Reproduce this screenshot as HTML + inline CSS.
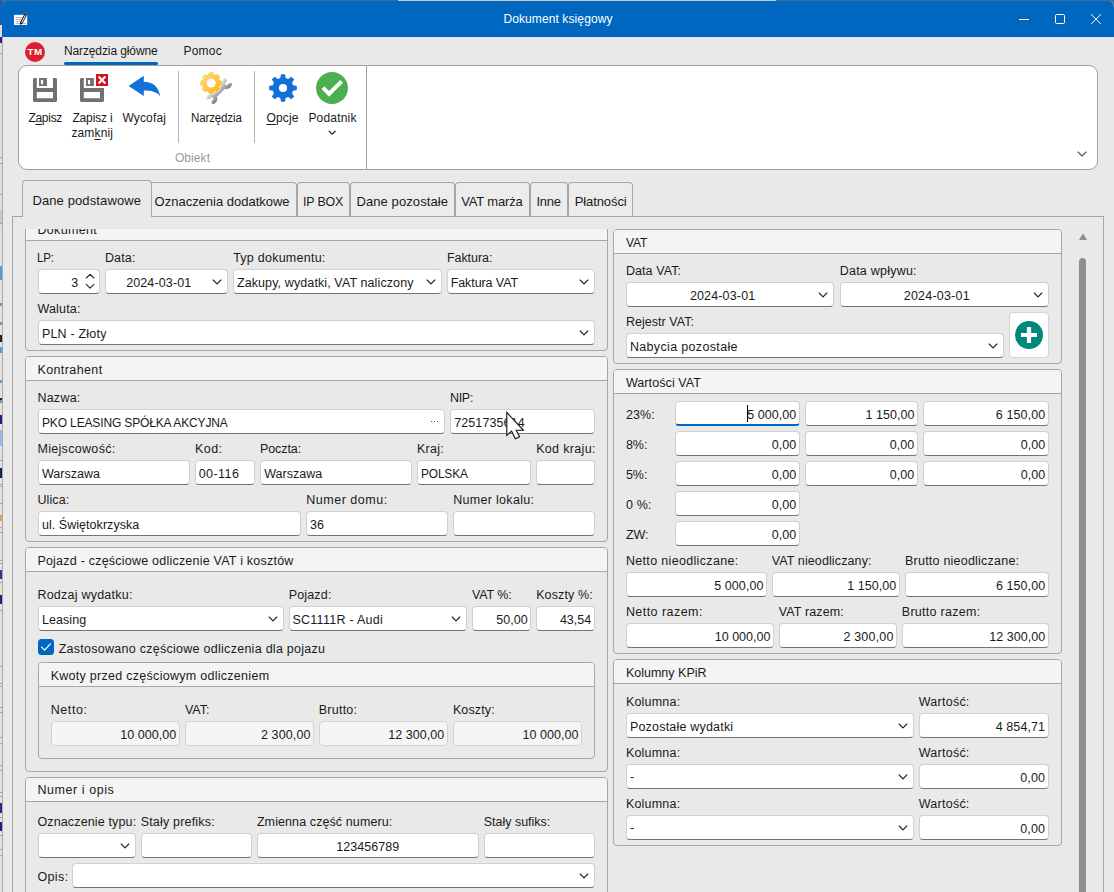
<!DOCTYPE html>
<html><head><meta charset="utf-8"><title>Dokument księgowy</title>
<style>
html,body{margin:0;padding:0;width:1114px;height:892px;overflow:hidden;background:#3d6c9e;}
#root{left:0;top:0;width:1114px;height:892px;overflow:hidden;background:#3d6c9e;font-family:'Liberation Sans', sans-serif;}
div,svg,span.t{position:absolute;}
span.t{white-space:pre;line-height:16px;font-family:'Liberation Sans', sans-serif;}
u{text-decoration:underline;text-underline-offset:1.5px;text-decoration-thickness:1px;}
</style></head><body><div id="root">
<div style="left:0px;top:0px;width:3px;height:892px;background:#dedede;"></div>
<div style="left:0px;top:0px;width:3px;height:25px;background:#0d63ba;"></div>
<div style="left:0px;top:25px;width:3px;height:12px;background:#dcdcdc;"></div>
<div style="left:0px;top:37px;width:2px;height:6px;background:#3a1a7a;"></div>
<div style="left:0px;top:234px;width:2px;height:386px;background:#e6e3da;"></div>
<div style="left:0px;top:620px;width:2px;height:272px;background:#e3e2de;"></div>
<div style="left:0px;top:53px;width:2px;height:1px;background:#a4a4a4;"></div>
<div style="left:0px;top:157px;width:2px;height:1px;background:#a4a4a4;"></div>
<div style="left:0px;top:163px;width:2px;height:1px;background:#a4a4a4;"></div>
<div style="left:0px;top:194px;width:2px;height:1px;background:#a4a4a4;"></div>
<div style="left:0px;top:223px;width:2px;height:1px;background:#a4a4a4;"></div>
<div style="left:0px;top:460px;width:2px;height:1px;background:#a4a4a4;"></div>
<div style="left:0px;top:484px;width:2px;height:1px;background:#a4a4a4;"></div>
<div style="left:0px;top:486px;width:2px;height:1px;background:#a4a4a4;"></div>
<div style="left:0px;top:503px;width:2px;height:1px;background:#a4a4a4;"></div>
<div style="left:0px;top:527px;width:2px;height:1px;background:#a4a4a4;"></div>
<div style="left:0px;top:532px;width:2px;height:1px;background:#a4a4a4;"></div>
<div style="left:0px;top:560px;width:2px;height:1px;background:#a4a4a4;"></div>
<div style="left:0px;top:563px;width:2px;height:1px;background:#a4a4a4;"></div>
<div style="left:0px;top:582px;width:2px;height:1px;background:#a4a4a4;"></div>
<div style="left:0px;top:610px;width:2px;height:1px;background:#a4a4a4;"></div>
<div style="left:0px;top:666px;width:2px;height:1px;background:#a4a4a4;"></div>
<div style="left:0px;top:683px;width:2px;height:1px;background:#a4a4a4;"></div>
<div style="left:0px;top:686px;width:2px;height:1px;background:#a4a4a4;"></div>
<div style="left:0px;top:707px;width:2px;height:1px;background:#a4a4a4;"></div>
<div style="left:0px;top:712px;width:2px;height:1px;background:#a4a4a4;"></div>
<div style="left:0px;top:737px;width:2px;height:1px;background:#a4a4a4;"></div>
<div style="left:0px;top:743px;width:2px;height:1px;background:#a4a4a4;"></div>
<div style="left:0px;top:765px;width:2px;height:1px;background:#a4a4a4;"></div>
<div style="left:0px;top:770px;width:2px;height:1px;background:#a4a4a4;"></div>
<div style="left:0px;top:792px;width:2px;height:1px;background:#a4a4a4;"></div>
<div style="left:0px;top:796px;width:2px;height:1px;background:#a4a4a4;"></div>
<div style="left:0px;top:817px;width:2px;height:1px;background:#a4a4a4;"></div>
<div style="left:0px;top:835px;width:2px;height:1px;background:#a4a4a4;"></div>
<div style="left:0px;top:849px;width:2px;height:1px;background:#a4a4a4;"></div>
<div style="left:0px;top:855px;width:2px;height:1px;background:#a4a4a4;"></div>
<div style="left:0px;top:210px;width:2px;height:13px;background:#c8c8c8;"></div>
<div style="left:0px;top:266px;width:2px;height:14px;background:#5b9bd5;"></div>
<div style="left:0px;top:303px;width:2px;height:3px;background:#5b9bd5;"></div>
<div style="left:0px;top:322px;width:2px;height:3px;background:#5b9bd5;"></div>
<div style="left:0px;top:335px;width:2px;height:7px;background:#222;"></div>
<div style="left:0px;top:347px;width:2px;height:6px;background:#5b9bd5;"></div>
<div style="left:0px;top:380px;width:2px;height:3px;background:#5b9bd5;"></div>
<div style="left:0px;top:398px;width:2px;height:2px;background:#1a1a6a;"></div>
<div style="left:0px;top:400px;width:2px;height:3px;background:#5b9bd5;"></div>
<div style="left:0px;top:415px;width:2px;height:9px;background:#2a1a7a;"></div>
<div style="left:0px;top:430px;width:2px;height:16px;background:#8fbce8;"></div>
<div style="left:0px;top:468px;width:2px;height:10px;background:#10254a;"></div>
<div style="left:0px;top:515px;width:2px;height:6px;background:#e0a050;"></div>
<div style="left:0px;top:570px;width:2px;height:9px;background:#4a2a8a;"></div>
<div style="left:0px;top:595px;width:2px;height:9px;background:#2a1a7a;"></div>
<div style="left:0px;top:803px;width:2px;height:10px;background:#2a2a8a;"></div>
<div style="left:0px;top:822px;width:2px;height:9px;background:#2a1a7a;"></div>
<div style="left:2px;top:0px;width:1112px;height:892px;background:#a9a9a9;border-top-left-radius:8px;border-top-right-radius:8px;"></div>
<div style="left:3px;top:0px;width:1111px;height:892px;background:#e9e9e9;border-top-left-radius:8px;border-top-right-radius:8px;"></div>
<div style="left:2px;top:0px;width:1112px;height:37px;background:#0067c0;border-top-left-radius:8px;border-top-right-radius:8px;"></div>
<div style="left:0px;top:0px;width:1114px;height:1px;background:#3d6c9e;"></div>
<div style="left:398px;top:0px;width:378px;height:1px;background:#c9c9c9;"></div>
<svg style="left:14px;top:13px" width="14" height="13" viewBox="0 0 14 13">
<rect x="0" y="1.8" width="13.2" height="10.2" fill="#ffffff"/>
<path d="M1.5 4.5H8.5 M1.5 6.5H7.5 M1.5 8.5H6.5 M1.5 10.5H12" stroke="#bdb8a0" stroke-width="1"/>
<path d="M10.5 0.8 L13 2 L8.5 10.6 L6.2 12 L6.1 9.4 Z" fill="#0a0a0a"/>
<path d="M10.95 2.0 L11.9 2.45 L8.1 9.7 L7.2 9.25 Z" fill="#cfe8ff"/>
<path d="M11.1 0 L13.3 1 L12.9 2.1 L10.6 1 Z" fill="#e0391c"/>
</svg>
<svg style="left:1010px;top:8px" width="100" height="24" viewBox="0 0 100 24">
<path d="M9 11.5H19" stroke="#fff" stroke-width="1"/>
<rect x="45.5" y="6.5" width="9" height="9" rx="1.2" fill="none" stroke="#fff" stroke-width="1"/>
<path d="M81 6.2 L91 16.2 M91 6.2 L81 16.2" stroke="#fff" stroke-width="1"/>
</svg>
<div style="left:24.5px;top:41.5px;width:20.6px;height:20.6px;background:#dc1f2e;border-radius:50%;"><div style="left:0;top:0.3px;width:20.6px;height:20.6px;text-align:center;font:bold 9.8px/20.6px 'Liberation Sans', sans-serif;color:#fff;letter-spacing:0.5px;text-indent:0.5px">TM</div></div>
<div style="left:64px;top:62px;width:94px;height:3px;background:#0067c0;border-radius:1.5px;"></div>
<div style="left:18px;top:65px;width:1080px;height:105px;box-sizing:border-box;background:#fff;border:1px solid #a0a0a0;border-radius:9px;"></div>
<div style="left:366px;top:66px;width:1px;height:103px;background:#a0a0a0;"></div>
<div style="left:178px;top:71px;width:1px;height:72px;background:#b5b5b5;"></div>
<div style="left:254px;top:71px;width:1px;height:72px;background:#b5b5b5;"></div>
<svg style="left:33px;top:78px" width="24" height="24" viewBox="0 0 24 24"><path fill="#717171" fill-rule="evenodd" d="M1.5 0H22.5A1.5 1.5 0 0 1 24 1.5V22.5A1.5 1.5 0 0 1 22.5 24H1.5A1.5 1.5 0 0 1 0 22.5V1.5A1.5 1.5 0 0 1 1.5 0Z M3.8 0V10.1H20V0Z M3.8 14H20V20.2H3.8Z"/><path fill="#717171" fill-rule="evenodd" d="M6 0H13.9V7.9H6Z M7.9 2H10.1V6.3H7.9Z"/></svg>
<svg style="left:80px;top:78px" width="24" height="24" viewBox="0 0 24 24"><path fill="#717171" fill-rule="evenodd" d="M1.5 0H3.8V10.1H24V22.5A1.5 1.5 0 0 1 22.5 24H1.5A1.5 1.5 0 0 1 0 22.5V1.5A1.5 1.5 0 0 1 1.5 0Z M3.8 14H20V20.2H3.8Z"/><path fill="#717171" fill-rule="evenodd" d="M6 0H13.9V7.9H6Z M7.9 2H10.1V6.3H7.9Z"/></svg>
<svg style="left:96px;top:74px" width="12" height="12" viewBox="0 0 12 12"><rect width="12" height="12" fill="#d0121c"/><path d="M2.6 2.6L9.4 9.4M9.4 2.6L2.6 9.4" stroke="#fff" stroke-width="2.1"/></svg>
<svg style="left:128px;top:75px" width="33" height="22" viewBox="128 75 33 22"><path fill="#1271d6" d="M128.6 86 L143.8 75.8 L143.8 81.8 C152.5 81.9 158.6 86.5 160.1 96.2 C156.3 91.8 151.5 90.6 143.8 90.6 L143.8 95.9 Z"/></svg>
<svg style="left:196px;top:68px" width="40" height="38" viewBox="196 68 40 38">
<defs><linearGradient id="gy" gradientUnits="userSpaceOnUse" x1="202" y1="73" x2="220" y2="93"><stop offset="0" stop-color="#fddc7a"/><stop offset="1" stop-color="#fbb61a"/></linearGradient>
<linearGradient id="gw" gradientUnits="userSpaceOnUse" x1="0" y1="-5" x2="0" y2="5"><stop offset="0" stop-color="#d9dbde"/><stop offset="1" stop-color="#7f8288"/></linearGradient></defs>
<g transform="translate(219.25 91.3) rotate(-46)">
<rect x="-8.5" y="-2.2" width="17" height="4.4" fill="url(#gw)"/>
<path d="M 13.2 2.34 A 3.5 3.5 0 1 1 13.2 -2.34" fill="none" stroke="url(#gw)" stroke-width="3.9"/>
<path d="M -13.2 -2.34 A 3.5 3.5 0 1 1 -13.2 2.34" fill="none" stroke="url(#gw)" stroke-width="3.9"/>
</g>
<path d="M208.30 75.29L209.60 72.91L212.60 72.91L213.90 75.29A8.30 8.30 0 0 1 214.65 75.60L217.24 74.83L219.37 76.96L218.60 79.55A8.30 8.30 0 0 1 218.91 80.30L221.29 81.60L221.29 84.60L218.91 85.90A8.30 8.30 0 0 1 218.60 86.65L219.37 89.24L217.24 91.37L214.65 90.60A8.30 8.30 0 0 1 213.90 90.91L212.60 93.29L209.60 93.29L208.30 90.91A8.30 8.30 0 0 1 207.55 90.60L204.96 91.37L202.83 89.24L203.60 86.65A8.30 8.30 0 0 1 203.29 85.90L200.91 84.60L200.91 81.60L203.29 80.30A8.30 8.30 0 0 1 203.60 79.55L202.83 76.96L204.96 74.83L207.55 75.60A8.30 8.30 0 0 1 208.30 75.29ZM216.00 83.10A4.9 4.9 0 1 0 206.20 83.10A4.9 4.9 0 1 0 216.00 83.10Z" fill="#fff" stroke="#fff" stroke-width="2.4" stroke-linejoin="round" opacity="0.85"/>
<path d="M208.30 75.29L209.60 72.91L212.60 72.91L213.90 75.29A8.30 8.30 0 0 1 214.65 75.60L217.24 74.83L219.37 76.96L218.60 79.55A8.30 8.30 0 0 1 218.91 80.30L221.29 81.60L221.29 84.60L218.91 85.90A8.30 8.30 0 0 1 218.60 86.65L219.37 89.24L217.24 91.37L214.65 90.60A8.30 8.30 0 0 1 213.90 90.91L212.60 93.29L209.60 93.29L208.30 90.91A8.30 8.30 0 0 1 207.55 90.60L204.96 91.37L202.83 89.24L203.60 86.65A8.30 8.30 0 0 1 203.29 85.90L200.91 84.60L200.91 81.60L203.29 80.30A8.30 8.30 0 0 1 203.60 79.55L202.83 76.96L204.96 74.83L207.55 75.60A8.30 8.30 0 0 1 208.30 75.29ZM216.00 83.10A4.9 4.9 0 1 0 206.20 83.10A4.9 4.9 0 1 0 216.00 83.10Z" fill="url(#gy)" fill-rule="evenodd" stroke="url(#gy)" stroke-width="1.3" stroke-linejoin="round"/>
<circle cx="211.1" cy="83.1" r="4.4" fill="#fff"/>
</svg>
<svg style="left:268px;top:73px" width="30" height="30" viewBox="268 73 30 30"><path d="M280.30 77.96L281.05 74.14L284.95 74.14L285.70 77.96A10.40 10.40 0 0 1 288.19 78.99L291.42 76.82L294.18 79.58L292.01 82.81A10.40 10.40 0 0 1 293.04 85.30L296.86 86.05L296.86 89.95L293.04 90.70A10.40 10.40 0 0 1 292.01 93.19L294.18 96.42L291.42 99.18L288.19 97.01A10.40 10.40 0 0 1 285.70 98.04L284.95 101.86L281.05 101.86L280.30 98.04A10.40 10.40 0 0 1 277.81 97.01L274.58 99.18L271.82 96.42L273.99 93.19A10.40 10.40 0 0 1 272.96 90.70L269.14 89.95L269.14 86.05L272.96 85.30A10.40 10.40 0 0 1 273.99 82.81L271.82 79.58L274.58 76.82L277.81 78.99A10.40 10.40 0 0 1 280.30 77.96ZM287.10 88.00A4.1 4.1 0 1 0 278.90 88.00A4.1 4.1 0 1 0 287.10 88.00Z" fill="#1271d6" fill-rule="evenodd"/></svg>
<svg style="left:316px;top:72px" width="32" height="32" viewBox="316 72 32 32"><circle cx="332" cy="88" r="15.95" fill="#4caf50"/><path d="M321.6 89 L324.3 86.2 L329 91 L340.2 80 L343 82.8 L329 96.8 Z" fill="#fff"/></svg>
<svg style="left:328px;top:130px" width="9" height="6" viewBox="0 0 9 6"><path d="M1.2 1.3 L4.2 4.1 L7.2 1.3" fill="none" stroke="#222" stroke-width="1.25" stroke-linecap="round" stroke-linejoin="round"/></svg>
<svg style="left:1077px;top:151px" width="10" height="7" viewBox="0 0 10 7"><path d="M1 1 L5 5 L9 1" fill="none" stroke="#555" stroke-width="1.1" stroke-linecap="round" stroke-linejoin="round"/></svg>
<div style="left:12px;top:216px;width:1092px;height:700px;box-sizing:border-box;border:1px solid #a6a6a6;background:#e9e9e9;"></div>
<div style="left:147px;top:182px;width:150px;height:34px;box-sizing:border-box;background:#ececec;border:1px solid #a6a6a6;border-bottom:none;border-radius:4px 4px 0 0;"></div>
<div style="left:297px;top:182px;width:53px;height:34px;box-sizing:border-box;background:#ececec;border:1px solid #a6a6a6;border-bottom:none;border-radius:4px 4px 0 0;"></div>
<div style="left:350px;top:182px;width:105px;height:34px;box-sizing:border-box;background:#ececec;border:1px solid #a6a6a6;border-bottom:none;border-radius:4px 4px 0 0;"></div>
<div style="left:455px;top:182px;width:75px;height:34px;box-sizing:border-box;background:#ececec;border:1px solid #a6a6a6;border-bottom:none;border-radius:4px 4px 0 0;"></div>
<div style="left:530px;top:182px;width:38px;height:34px;box-sizing:border-box;background:#ececec;border:1px solid #a6a6a6;border-bottom:none;border-radius:4px 4px 0 0;"></div>
<div style="left:568px;top:182px;width:65px;height:34px;box-sizing:border-box;background:#ececec;border:1px solid #a6a6a6;border-bottom:none;border-radius:4px 4px 0 0;"></div>
<div style="left:22px;top:180px;width:130px;height:37px;box-sizing:border-box;background:#e9e9e9;border:1px solid #a6a6a6;border-bottom:none;border-radius:4px 4px 0 0;"></div>
<div style="left:0;top:229px;width:612px;height:663px;overflow:hidden"><div style="left:0;top:-229px;width:612px;height:892px">
<div style="left:25px;top:216px;width:583px;height:135px;box-sizing:border-box;background:#e9e9e9;border:1px solid #a6a6a6;border-radius:4px;overflow:hidden;"><div style="left:0;top:0;width:581px;height:23px;background:#f4f4f4;border-bottom:1px solid #a6a6a6"></div></div>
<span class="t" style="left:37.40px;top:222px;font-size:12.5px;color:#1a1a1a;letter-spacing:0.339px;">Dokument</span>
</div></div>
<div style="left:38px;top:269px;width:62px;height:25px;box-sizing:border-box;background:#fff;border:1px solid #d0d0d0;border-bottom:1px solid #757575;border-radius:4px;"></div>
<svg style="left:85px;top:273px" width="11" height="17" viewBox="0 0 11 17"><path d="M1.3 5.0 L5.1 1.3 L8.9 5.0 M1.3 11.4 L5.1 15.1 L8.9 11.4" fill="none" stroke="#222" stroke-width="1.1" stroke-linecap="round" stroke-linejoin="round"/></svg>
<div style="left:105px;top:269px;width:123px;height:25px;box-sizing:border-box;background:#fff;border:1px solid #d0d0d0;border-bottom:1px solid #757575;border-radius:4px;"><svg width="10" height="6" viewBox="0 0 10 6" style="position:absolute;right:5px;top:9px"><path d="M1.2 1 L5 4.8 L8.8 1" fill="none" stroke="#222" stroke-width="1.15" stroke-linecap="round" stroke-linejoin="round"/></svg></div>
<div style="left:233px;top:269px;width:209px;height:25px;box-sizing:border-box;background:#fff;border:1px solid #d0d0d0;border-bottom:1px solid #757575;border-radius:4px;"><svg width="10" height="6" viewBox="0 0 10 6" style="position:absolute;right:5px;top:9px"><path d="M1.2 1 L5 4.8 L8.8 1" fill="none" stroke="#222" stroke-width="1.15" stroke-linecap="round" stroke-linejoin="round"/></svg></div>
<div style="left:447px;top:269px;width:148px;height:25px;box-sizing:border-box;background:#fff;border:1px solid #d0d0d0;border-bottom:1px solid #757575;border-radius:4px;"><svg width="10" height="6" viewBox="0 0 10 6" style="position:absolute;right:5px;top:9px"><path d="M1.2 1 L5 4.8 L8.8 1" fill="none" stroke="#222" stroke-width="1.15" stroke-linecap="round" stroke-linejoin="round"/></svg></div>
<div style="left:38px;top:320px;width:557px;height:25px;box-sizing:border-box;background:#fff;border:1px solid #d0d0d0;border-bottom:1px solid #757575;border-radius:4px;"><svg width="10" height="6" viewBox="0 0 10 6" style="position:absolute;right:5px;top:9px"><path d="M1.2 1 L5 4.8 L8.8 1" fill="none" stroke="#222" stroke-width="1.15" stroke-linecap="round" stroke-linejoin="round"/></svg></div>
<div style="left:25px;top:356px;width:583px;height:186px;box-sizing:border-box;background:#e9e9e9;border:1px solid #a6a6a6;border-radius:4px;overflow:hidden;"><div style="left:0;top:0;width:581px;height:23px;background:#f4f4f4;border-bottom:1px solid #a6a6a6"></div></div>
<div style="left:38px;top:409px;width:407px;height:25px;box-sizing:border-box;background:#fff;border:1px solid #d0d0d0;border-bottom:1px solid #757575;border-radius:4px;"></div>
<div style="left:431px;top:421px;width:8px;height:2px;"><div style="left:0;top:0;width:1.3px;height:1.3px;background:#555"></div><div style="left:3px;top:0;width:1.3px;height:1.3px;background:#555"></div><div style="left:6px;top:0;width:1.3px;height:1.3px;background:#555"></div></div>
<div style="left:450px;top:409px;width:145px;height:25px;box-sizing:border-box;background:#fff;border:1px solid #d0d0d0;border-bottom:1px solid #757575;border-radius:4px;"></div>
<div style="left:38px;top:460px;width:152px;height:25px;box-sizing:border-box;background:#fff;border:1px solid #d0d0d0;border-bottom:1px solid #757575;border-radius:4px;"></div>
<div style="left:195px;top:460px;width:60px;height:25px;box-sizing:border-box;background:#fff;border:1px solid #d0d0d0;border-bottom:1px solid #757575;border-radius:4px;"></div>
<div style="left:260px;top:460px;width:152px;height:25px;box-sizing:border-box;background:#fff;border:1px solid #d0d0d0;border-bottom:1px solid #757575;border-radius:4px;"></div>
<div style="left:417px;top:460px;width:114px;height:25px;box-sizing:border-box;background:#fff;border:1px solid #d0d0d0;border-bottom:1px solid #757575;border-radius:4px;"></div>
<div style="left:536px;top:460px;width:59px;height:25px;box-sizing:border-box;background:#fff;border:1px solid #d0d0d0;border-bottom:1px solid #757575;border-radius:4px;"></div>
<div style="left:38px;top:511px;width:263px;height:25px;box-sizing:border-box;background:#fff;border:1px solid #d0d0d0;border-bottom:1px solid #757575;border-radius:4px;"></div>
<div style="left:306px;top:511px;width:142px;height:25px;box-sizing:border-box;background:#fff;border:1px solid #d0d0d0;border-bottom:1px solid #757575;border-radius:4px;"></div>
<div style="left:453px;top:511px;width:142px;height:25px;box-sizing:border-box;background:#fff;border:1px solid #d0d0d0;border-bottom:1px solid #757575;border-radius:4px;"></div>
<div style="left:25px;top:547px;width:583px;height:225px;box-sizing:border-box;background:#e9e9e9;border:1px solid #a6a6a6;border-radius:4px;overflow:hidden;"><div style="left:0;top:0;width:581px;height:23px;background:#f4f4f4;border-bottom:1px solid #a6a6a6"></div></div>
<div style="left:38px;top:606px;width:246px;height:25px;box-sizing:border-box;background:#fff;border:1px solid #d0d0d0;border-bottom:1px solid #757575;border-radius:4px;"><svg width="10" height="6" viewBox="0 0 10 6" style="position:absolute;right:5px;top:9px"><path d="M1.2 1 L5 4.8 L8.8 1" fill="none" stroke="#222" stroke-width="1.15" stroke-linecap="round" stroke-linejoin="round"/></svg></div>
<div style="left:289px;top:606px;width:178px;height:25px;box-sizing:border-box;background:#fff;border:1px solid #d0d0d0;border-bottom:1px solid #757575;border-radius:4px;"><svg width="10" height="6" viewBox="0 0 10 6" style="position:absolute;right:5px;top:9px"><path d="M1.2 1 L5 4.8 L8.8 1" fill="none" stroke="#222" stroke-width="1.15" stroke-linecap="round" stroke-linejoin="round"/></svg></div>
<div style="left:472px;top:606px;width:59px;height:25px;box-sizing:border-box;background:#fff;border:1px solid #d0d0d0;border-bottom:1px solid #757575;border-radius:4px;"></div>
<div style="left:536px;top:606px;width:59px;height:25px;box-sizing:border-box;background:#fff;border:1px solid #d0d0d0;border-bottom:1px solid #757575;border-radius:4px;"></div>
<div style="left:38px;top:639px;width:16px;height:16px;background:#0067c0;border-radius:3.5px;"><svg style="left:0;top:0" width="16" height="16" viewBox="0 0 16 16"><path d="M3.6 8.2 L6.6 11.2 L12.4 4.8" fill="none" stroke="#fff" stroke-width="1.2" stroke-linecap="round" stroke-linejoin="round"/></svg></div>
<div style="left:38px;top:662px;width:557px;height:97px;box-sizing:border-box;background:#e9e9e9;border:1px solid #a6a6a6;border-radius:4px;overflow:hidden;"><div style="left:0;top:0;width:555px;height:23px;background:#f4f4f4;border-bottom:1px solid #a6a6a6"></div></div>
<div style="left:51px;top:721px;width:129px;height:25px;box-sizing:border-box;background:#f5f5f5;border:1px solid #d2d2d2;border-radius:4px;"></div>
<div style="left:185px;top:721px;width:129px;height:25px;box-sizing:border-box;background:#f5f5f5;border:1px solid #d2d2d2;border-radius:4px;"></div>
<div style="left:319px;top:721px;width:129px;height:25px;box-sizing:border-box;background:#f5f5f5;border:1px solid #d2d2d2;border-radius:4px;"></div>
<div style="left:453px;top:721px;width:129px;height:25px;box-sizing:border-box;background:#f5f5f5;border:1px solid #d2d2d2;border-radius:4px;"></div>
<div style="left:25px;top:777px;width:583px;height:124px;box-sizing:border-box;background:#e9e9e9;border:1px solid #a6a6a6;border-radius:4px;overflow:hidden;"><div style="left:0;top:0;width:581px;height:23px;background:#f4f4f4;border-bottom:1px solid #a6a6a6"></div></div>
<div style="left:38px;top:833px;width:98px;height:25px;box-sizing:border-box;background:#fff;border:1px solid #d0d0d0;border-bottom:1px solid #757575;border-radius:4px;"><svg width="10" height="6" viewBox="0 0 10 6" style="position:absolute;right:5px;top:9px"><path d="M1.2 1 L5 4.8 L8.8 1" fill="none" stroke="#222" stroke-width="1.15" stroke-linecap="round" stroke-linejoin="round"/></svg></div>
<div style="left:141px;top:833px;width:111px;height:25px;box-sizing:border-box;background:#fff;border:1px solid #d0d0d0;border-bottom:1px solid #757575;border-radius:4px;"></div>
<div style="left:257px;top:833px;width:222px;height:25px;box-sizing:border-box;background:#fff;border:1px solid #d0d0d0;border-bottom:1px solid #757575;border-radius:4px;"></div>
<div style="left:484px;top:833px;width:111px;height:25px;box-sizing:border-box;background:#fff;border:1px solid #d0d0d0;border-bottom:1px solid #757575;border-radius:4px;"></div>
<div style="left:72px;top:863px;width:523px;height:25px;box-sizing:border-box;background:#fff;border:1px solid #d0d0d0;border-bottom:1px solid #757575;border-radius:4px;"><svg width="10" height="6" viewBox="0 0 10 6" style="position:absolute;right:5px;top:9px"><path d="M1.2 1 L5 4.8 L8.8 1" fill="none" stroke="#222" stroke-width="1.15" stroke-linecap="round" stroke-linejoin="round"/></svg></div>
<div style="left:613px;top:229px;width:449px;height:135px;box-sizing:border-box;background:#e9e9e9;border:1px solid #a6a6a6;border-radius:4px;overflow:hidden;"><div style="left:0;top:0;width:447px;height:23px;background:#f4f4f4;border-bottom:1px solid #a6a6a6"></div></div>
<div style="left:626px;top:282px;width:208px;height:25px;box-sizing:border-box;background:#fff;border:1px solid #d0d0d0;border-bottom:1px solid #757575;border-radius:4px;"><svg width="10" height="6" viewBox="0 0 10 6" style="position:absolute;right:5px;top:9px"><path d="M1.2 1 L5 4.8 L8.8 1" fill="none" stroke="#222" stroke-width="1.15" stroke-linecap="round" stroke-linejoin="round"/></svg></div>
<div style="left:840px;top:282px;width:209px;height:25px;box-sizing:border-box;background:#fff;border:1px solid #d0d0d0;border-bottom:1px solid #757575;border-radius:4px;"><svg width="10" height="6" viewBox="0 0 10 6" style="position:absolute;right:5px;top:9px"><path d="M1.2 1 L5 4.8 L8.8 1" fill="none" stroke="#222" stroke-width="1.15" stroke-linecap="round" stroke-linejoin="round"/></svg></div>
<div style="left:626px;top:333px;width:378px;height:25px;box-sizing:border-box;background:#fff;border:1px solid #d0d0d0;border-bottom:1px solid #757575;border-radius:4px;"><svg width="10" height="6" viewBox="0 0 10 6" style="position:absolute;right:5px;top:9px"><path d="M1.2 1 L5 4.8 L8.8 1" fill="none" stroke="#222" stroke-width="1.15" stroke-linecap="round" stroke-linejoin="round"/></svg></div>
<div style="left:1009px;top:312px;width:40px;height:46px;box-sizing:border-box;background:#ffffff;border:1px solid #d4d4d4;border-radius:4px;"></div>
<svg style="left:1015px;top:321px" width="28" height="28" viewBox="0 0 28 28"><circle cx="14" cy="14" r="14" fill="#00897b"/><path d="M14 6V22M6 14H22" stroke="#fff" stroke-width="4.2"/></svg>
<div style="left:613px;top:369px;width:449px;height:285px;box-sizing:border-box;background:#e9e9e9;border:1px solid #a6a6a6;border-radius:4px;overflow:hidden;"><div style="left:0;top:0;width:447px;height:23px;background:#f4f4f4;border-bottom:1px solid #a6a6a6"></div></div>
<div style="left:675px;top:401px;width:125px;height:25px;box-sizing:border-box;background:#fff;border:1px solid #d0d0d0;border-bottom:2px solid #0067c0;border-radius:4px;"></div>
<div style="left:805px;top:401px;width:113px;height:25px;box-sizing:border-box;background:#fff;border:1px solid #d0d0d0;border-bottom:1px solid #757575;border-radius:4px;"></div>
<div style="left:923px;top:401px;width:126px;height:25px;box-sizing:border-box;background:#fff;border:1px solid #d0d0d0;border-bottom:1px solid #757575;border-radius:4px;"></div>
<div style="left:675px;top:431px;width:125px;height:25px;box-sizing:border-box;background:#fff;border:1px solid #d0d0d0;border-bottom:1px solid #757575;border-radius:4px;"></div>
<div style="left:805px;top:431px;width:113px;height:25px;box-sizing:border-box;background:#fff;border:1px solid #d0d0d0;border-bottom:1px solid #757575;border-radius:4px;"></div>
<div style="left:923px;top:431px;width:126px;height:25px;box-sizing:border-box;background:#fff;border:1px solid #d0d0d0;border-bottom:1px solid #757575;border-radius:4px;"></div>
<div style="left:675px;top:461px;width:125px;height:25px;box-sizing:border-box;background:#fff;border:1px solid #d0d0d0;border-bottom:1px solid #757575;border-radius:4px;"></div>
<div style="left:805px;top:461px;width:113px;height:25px;box-sizing:border-box;background:#fff;border:1px solid #d0d0d0;border-bottom:1px solid #757575;border-radius:4px;"></div>
<div style="left:923px;top:461px;width:126px;height:25px;box-sizing:border-box;background:#fff;border:1px solid #d0d0d0;border-bottom:1px solid #757575;border-radius:4px;"></div>
<div style="left:675px;top:491px;width:125px;height:25px;box-sizing:border-box;background:#fff;border:1px solid #d0d0d0;border-bottom:1px solid #757575;border-radius:4px;"></div>
<div style="left:675px;top:521px;width:125px;height:25px;box-sizing:border-box;background:#fff;border:1px solid #d0d0d0;border-bottom:1px solid #757575;border-radius:4px;"></div>
<div style="left:747px;top:405px;width:1px;height:17px;background:#000;"></div>
<div style="left:626px;top:572px;width:141px;height:25px;box-sizing:border-box;background:#fff;border:1px solid #d0d0d0;border-bottom:1px solid #757575;border-radius:4px;"></div>
<div style="left:772px;top:572px;width:128px;height:25px;box-sizing:border-box;background:#fff;border:1px solid #d0d0d0;border-bottom:1px solid #757575;border-radius:4px;"></div>
<div style="left:905px;top:572px;width:144px;height:25px;box-sizing:border-box;background:#fff;border:1px solid #d0d0d0;border-bottom:1px solid #757575;border-radius:4px;"></div>
<div style="left:626px;top:623px;width:148px;height:25px;box-sizing:border-box;background:#fff;border:1px solid #d0d0d0;border-bottom:1px solid #757575;border-radius:4px;"></div>
<div style="left:779px;top:623px;width:118px;height:25px;box-sizing:border-box;background:#fff;border:1px solid #d0d0d0;border-bottom:1px solid #757575;border-radius:4px;"></div>
<div style="left:902px;top:623px;width:147px;height:25px;box-sizing:border-box;background:#fff;border:1px solid #d0d0d0;border-bottom:1px solid #757575;border-radius:4px;"></div>
<div style="left:613px;top:659px;width:449px;height:187px;box-sizing:border-box;background:#e9e9e9;border:1px solid #a6a6a6;border-radius:4px;overflow:hidden;"><div style="left:0;top:0;width:447px;height:23px;background:#f4f4f4;border-bottom:1px solid #a6a6a6"></div></div>
<div style="left:626px;top:713px;width:288px;height:25px;box-sizing:border-box;background:#fff;border:1px solid #d0d0d0;border-bottom:1px solid #757575;border-radius:4px;"><svg width="10" height="6" viewBox="0 0 10 6" style="position:absolute;right:5px;top:9px"><path d="M1.2 1 L5 4.8 L8.8 1" fill="none" stroke="#222" stroke-width="1.15" stroke-linecap="round" stroke-linejoin="round"/></svg></div>
<div style="left:919px;top:713px;width:130px;height:25px;box-sizing:border-box;background:#fff;border:1px solid #d0d0d0;border-bottom:1px solid #757575;border-radius:4px;"></div>
<div style="left:626px;top:764px;width:288px;height:25px;box-sizing:border-box;background:#fff;border:1px solid #d0d0d0;border-bottom:1px solid #757575;border-radius:4px;"><svg width="10" height="6" viewBox="0 0 10 6" style="position:absolute;right:5px;top:9px"><path d="M1.2 1 L5 4.8 L8.8 1" fill="none" stroke="#222" stroke-width="1.15" stroke-linecap="round" stroke-linejoin="round"/></svg></div>
<div style="left:919px;top:764px;width:130px;height:25px;box-sizing:border-box;background:#fff;border:1px solid #d0d0d0;border-bottom:1px solid #757575;border-radius:4px;"></div>
<div style="left:626px;top:815px;width:288px;height:25px;box-sizing:border-box;background:#fff;border:1px solid #d0d0d0;border-bottom:1px solid #757575;border-radius:4px;"><svg width="10" height="6" viewBox="0 0 10 6" style="position:absolute;right:5px;top:9px"><path d="M1.2 1 L5 4.8 L8.8 1" fill="none" stroke="#222" stroke-width="1.15" stroke-linecap="round" stroke-linejoin="round"/></svg></div>
<div style="left:919px;top:815px;width:130px;height:25px;box-sizing:border-box;background:#fff;border:1px solid #d0d0d0;border-bottom:1px solid #757575;border-radius:4px;"></div>
<svg style="left:1079px;top:233px" width="8" height="7" viewBox="0 0 8 7"><path d="M0 7 L4 0.5 L8 7 Z" fill="#8d8d8d"/></svg>
<div style="left:1079px;top:258px;width:7px;height:640px;background:#8e8e8e;border-radius:3.5px;"></div>
<span class="t" style="left:503.40px;top:11px;font-size:12px;color:#ffffff;letter-spacing:0.106px;">Dokument księgowy</span>
<span class="t" style="left:63.90px;top:43px;font-size:12px;color:#1a1a1a;letter-spacing:-0.106px;">Narzędzia główne</span>
<span class="t" style="left:183.40px;top:43px;font-size:12px;color:#1a1a1a;letter-spacing:0.268px;">Pomoc</span>
<span class="t" style="left:28.40px;top:110px;font-size:12px;color:#1a1a1a;letter-spacing:-0.279px;">Z<u>a</u>pisz</span>
<span class="t" style="left:72.40px;top:110px;font-size:12px;color:#1a1a1a;letter-spacing:-0.143px;">Zapisz i</span>
<span class="t" style="left:71.40px;top:125px;font-size:12px;color:#1a1a1a;letter-spacing:0.145px;">zam<u>k</u>nij</span>
<span class="t" style="left:122.40px;top:110px;font-size:12px;color:#1a1a1a;letter-spacing:0.160px;">Wycofaj</span>
<span class="t" style="left:190.90px;top:110px;font-size:12px;color:#1a1a1a;letter-spacing:-0.150px;transform:scaleX(0.9624);transform-origin:0 0;">Narzędzia</span>
<span class="t" style="left:266.40px;top:110px;font-size:12px;color:#1a1a1a;letter-spacing:0.168px;"><u>O</u>pcje</span>
<span class="t" style="left:308.40px;top:110px;font-size:12px;color:#1a1a1a;letter-spacing:0.187px;">Podatnik</span>
<span class="t" style="left:174.90px;top:150px;font-size:12px;color:#9a9a9a;letter-spacing:0.085px;">Obiekt</span>
<span class="t" style="left:154.60px;top:194px;font-size:13px;color:#1a1a1a;letter-spacing:-0.008px;">Oznaczenia dodatkowe</span>
<span class="t" style="left:303.40px;top:194px;font-size:13px;color:#1a1a1a;letter-spacing:-0.150px;transform:scaleX(0.9520);transform-origin:0 0;">IP BOX</span>
<span class="t" style="left:356.40px;top:194px;font-size:13px;color:#1a1a1a;letter-spacing:0.097px;">Dane pozostałe</span>
<span class="t" style="left:461.15px;top:194px;font-size:13px;color:#1a1a1a;letter-spacing:-0.157px;">VAT marża</span>
<span class="t" style="left:536.40px;top:194px;font-size:13px;color:#1a1a1a;letter-spacing:-0.278px;">Inne</span>
<span class="t" style="left:574.65px;top:194px;font-size:13px;color:#1a1a1a;letter-spacing:-0.089px;">Płatności</span>
<span class="t" style="left:32.40px;top:193px;font-size:13px;color:#1a1a1a;letter-spacing:0.115px;">Dane podstawowe</span>
<span class="t" style="left:37.40px;top:250px;font-size:12.5px;color:#1a1a1a;letter-spacing:-0.150px;transform:scaleX(0.9254);transform-origin:0 0;">LP:</span>
<span class="t" style="left:104.90px;top:250px;font-size:12.5px;color:#1a1a1a;letter-spacing:0.162px;">Data:</span>
<span class="t" style="left:233.15px;top:250px;font-size:12.5px;color:#1a1a1a;letter-spacing:0.250px;">Typ dokumentu:</span>
<span class="t" style="left:446.90px;top:250px;font-size:12.5px;color:#1a1a1a;letter-spacing:-0.051px;">Faktura:</span>
<span class="t" style="left:71.15px;top:275px;font-size:12.5px;color:#1a1a1a;">3</span>
<span class="t" style="left:126.15px;top:275px;font-size:12.5px;color:#1a1a1a;letter-spacing:0.125px;">2024-03-01</span>
<span class="t" style="left:236.90px;top:275px;font-size:12.5px;color:#1a1a1a;letter-spacing:0.108px;">Zakupy, wydatki, VAT naliczony</span>
<span class="t" style="left:450.65px;top:275px;font-size:12.5px;color:#1a1a1a;letter-spacing:-0.078px;">Faktura VAT</span>
<span class="t" style="left:37.40px;top:301px;font-size:12.5px;color:#1a1a1a;letter-spacing:0.183px;">Waluta:</span>
<span class="t" style="left:41.90px;top:326px;font-size:12.5px;color:#1a1a1a;letter-spacing:0.199px;">PLN - Złoty</span>
<span class="t" style="left:37.40px;top:362px;font-size:12.5px;color:#1a1a1a;letter-spacing:0.403px;">Kontrahent</span>
<span class="t" style="left:37.40px;top:390px;font-size:12.5px;color:#1a1a1a;letter-spacing:0.252px;">Nazwa:</span>
<span class="t" style="left:449.90px;top:390px;font-size:12.5px;color:#1a1a1a;letter-spacing:-0.278px;">NIP:</span>
<span class="t" style="left:41.90px;top:415px;font-size:12.5px;color:#1a1a1a;letter-spacing:-0.150px;transform:scaleX(0.9601);transform-origin:0 0;">PKO LEASING SPÓŁKA AKCYJNA</span>
<span class="t" style="left:454.15px;top:415px;font-size:12.5px;color:#1a1a1a;letter-spacing:0.117px;">7251735614</span>
<span class="t" style="left:37.40px;top:441px;font-size:12.5px;color:#1a1a1a;letter-spacing:0.323px;">Miejscowość:</span>
<span class="t" style="left:194.90px;top:441px;font-size:12.5px;color:#1a1a1a;letter-spacing:0.495px;">Kod:</span>
<span class="t" style="left:259.90px;top:441px;font-size:12.5px;color:#1a1a1a;letter-spacing:-0.070px;">Poczta:</span>
<span class="t" style="left:416.90px;top:441px;font-size:12.5px;color:#1a1a1a;letter-spacing:0.299px;">Kraj:</span>
<span class="t" style="left:536.15px;top:441px;font-size:12.5px;color:#1a1a1a;letter-spacing:0.342px;">Kod kraju:</span>
<span class="t" style="left:41.90px;top:466px;font-size:12.5px;color:#1a1a1a;letter-spacing:0.039px;">Warszawa</span>
<span class="t" style="left:198.65px;top:466px;font-size:12.5px;color:#1a1a1a;letter-spacing:0.450px;">00-116</span>
<span class="t" style="left:264.15px;top:466px;font-size:12.5px;color:#1a1a1a;letter-spacing:0.039px;">Warszawa</span>
<span class="t" style="left:420.65px;top:466px;font-size:12.5px;color:#1a1a1a;letter-spacing:-0.150px;transform:scaleX(0.9505);transform-origin:0 0;">POLSKA</span>
<span class="t" style="left:37.40px;top:492px;font-size:12.5px;color:#1a1a1a;letter-spacing:0.114px;">Ulica:</span>
<span class="t" style="left:306.15px;top:492px;font-size:12.5px;color:#1a1a1a;letter-spacing:0.542px;">Numer domu:</span>
<span class="t" style="left:453.15px;top:492px;font-size:12.5px;color:#1a1a1a;letter-spacing:0.313px;">Numer lokalu:</span>
<span class="t" style="left:41.90px;top:517px;font-size:12.5px;color:#1a1a1a;letter-spacing:0.052px;">ul. Świętokrzyska</span>
<span class="t" style="left:309.90px;top:517px;font-size:12.5px;color:#1a1a1a;letter-spacing:0.272px;">36</span>
<span class="t" style="left:37.40px;top:553px;font-size:12.5px;color:#1a1a1a;letter-spacing:0.222px;">Pojazd - częściowe odliczenie VAT i kosztów</span>
<span class="t" style="left:37.40px;top:587px;font-size:12.5px;color:#1a1a1a;letter-spacing:0.232px;">Rodzaj wydatku:</span>
<span class="t" style="left:288.65px;top:587px;font-size:12.5px;color:#1a1a1a;letter-spacing:0.178px;">Pojazd:</span>
<span class="t" style="left:471.90px;top:587px;font-size:12.5px;color:#1a1a1a;letter-spacing:-0.099px;">VAT %:</span>
<span class="t" style="left:536.15px;top:587px;font-size:12.5px;color:#1a1a1a;letter-spacing:0.125px;">Koszty %:</span>
<span class="t" style="left:41.90px;top:612px;font-size:12.5px;color:#1a1a1a;letter-spacing:0.093px;">Leasing</span>
<span class="t" style="left:292.40px;top:612px;font-size:12.5px;color:#1a1a1a;letter-spacing:0.274px;">SC1111R - Audi</span>
<span class="t" style="left:496.15px;top:612px;font-size:12.5px;color:#1a1a1a;letter-spacing:0.084px;">50,00</span>
<span class="t" style="left:559.90px;top:612px;font-size:12.5px;color:#1a1a1a;letter-spacing:-0.016px;">43,54</span>
<span class="t" style="left:58.65px;top:641px;font-size:12.5px;color:#1a1a1a;letter-spacing:0.272px;">Zastosowano częściowe odliczenia dla pojazu</span>
<span class="t" style="left:50.65px;top:668px;font-size:12.5px;color:#1a1a1a;letter-spacing:0.282px;">Kwoty przed częściowym odliczeniem</span>
<span class="t" style="left:50.65px;top:702px;font-size:12.5px;color:#1a1a1a;letter-spacing:0.598px;">Netto:</span>
<span class="t" style="left:184.90px;top:702px;font-size:12.5px;color:#1a1a1a;letter-spacing:-0.024px;">VAT:</span>
<span class="t" style="left:318.65px;top:702px;font-size:12.5px;color:#1a1a1a;letter-spacing:0.267px;">Brutto:</span>
<span class="t" style="left:452.90px;top:702px;font-size:12.5px;color:#1a1a1a;letter-spacing:0.136px;">Koszty:</span>
<span class="t" style="left:120.15px;top:727px;font-size:12.5px;color:#1a1a1a;letter-spacing:0.066px;">10 000,00</span>
<span class="t" style="left:260.90px;top:727px;font-size:12.5px;color:#1a1a1a;letter-spacing:0.129px;">2 300,00</span>
<span class="t" style="left:388.15px;top:727px;font-size:12.5px;color:#1a1a1a;letter-spacing:0.066px;">12 300,00</span>
<span class="t" style="left:522.40px;top:727px;font-size:12.5px;color:#1a1a1a;letter-spacing:0.066px;">10 000,00</span>
<span class="t" style="left:37.40px;top:782px;font-size:12.5px;color:#1a1a1a;letter-spacing:0.565px;">Numer i opis</span>
<span class="t" style="left:37.40px;top:814px;font-size:12.5px;color:#1a1a1a;letter-spacing:0.147px;">Oznaczenie typu:</span>
<span class="t" style="left:140.65px;top:814px;font-size:12.5px;color:#1a1a1a;letter-spacing:0.188px;">Stały prefiks:</span>
<span class="t" style="left:256.90px;top:814px;font-size:12.5px;color:#1a1a1a;letter-spacing:0.098px;">Zmienna część numeru:</span>
<span class="t" style="left:483.65px;top:814px;font-size:12.5px;color:#1a1a1a;">Stały sufiks:</span>
<span class="t" style="left:336.15px;top:839px;font-size:12.5px;color:#1a1a1a;letter-spacing:0.069px;">123456789</span>
<span class="t" style="left:37.40px;top:869px;font-size:12.5px;color:#1a1a1a;letter-spacing:0.403px;">Opis:</span>
<span class="t" style="left:625.90px;top:235px;font-size:12.5px;color:#1a1a1a;letter-spacing:-0.150px;transform:scaleX(0.9628);transform-origin:0 0;">VAT</span>
<span class="t" style="left:625.90px;top:263px;font-size:12.5px;color:#1a1a1a;letter-spacing:0.086px;">Data VAT:</span>
<span class="t" style="left:839.70px;top:263px;font-size:12.5px;color:#1a1a1a;letter-spacing:0.230px;">Data wpływu:</span>
<span class="t" style="left:689.90px;top:288px;font-size:12.5px;color:#1a1a1a;letter-spacing:0.150px;">2024-03-01</span>
<span class="t" style="left:903.80px;top:288px;font-size:12.5px;color:#1a1a1a;letter-spacing:0.205px;">2024-03-01</span>
<span class="t" style="left:625.90px;top:314px;font-size:12.5px;color:#1a1a1a;letter-spacing:0.049px;">Rejestr VAT:</span>
<span class="t" style="left:629.90px;top:339px;font-size:12.5px;color:#1a1a1a;letter-spacing:0.341px;">Nabycia pozostałe</span>
<span class="t" style="left:625.90px;top:375px;font-size:12.5px;color:#1a1a1a;letter-spacing:0.092px;">Wartości VAT</span>
<span class="t" style="left:625.90px;top:407px;font-size:12.5px;color:#1a1a1a;letter-spacing:0.113px;">23%:</span>
<span class="t" style="left:747.20px;top:407px;font-size:12.5px;color:#1a1a1a;letter-spacing:0.066px;">5 000,00</span>
<span class="t" style="left:865.40px;top:407px;font-size:12.5px;color:#1a1a1a;letter-spacing:0.041px;">1 150,00</span>
<span class="t" style="left:995.80px;top:407px;font-size:12.5px;color:#1a1a1a;letter-spacing:0.116px;">6 150,00</span>
<span class="t" style="left:625.90px;top:437px;font-size:12.5px;color:#1a1a1a;letter-spacing:-0.032px;">8%:</span>
<span class="t" style="left:771.70px;top:437px;font-size:12.5px;color:#1a1a1a;letter-spacing:0.089px;">0,00</span>
<span class="t" style="left:889.70px;top:437px;font-size:12.5px;color:#1a1a1a;letter-spacing:0.089px;">0,00</span>
<span class="t" style="left:1020.70px;top:437px;font-size:12.5px;color:#1a1a1a;letter-spacing:0.089px;">0,00</span>
<span class="t" style="left:625.90px;top:467px;font-size:12.5px;color:#1a1a1a;letter-spacing:-0.032px;">5%:</span>
<span class="t" style="left:771.70px;top:467px;font-size:12.5px;color:#1a1a1a;letter-spacing:0.089px;">0,00</span>
<span class="t" style="left:889.70px;top:467px;font-size:12.5px;color:#1a1a1a;letter-spacing:0.089px;">0,00</span>
<span class="t" style="left:1020.70px;top:467px;font-size:12.5px;color:#1a1a1a;letter-spacing:0.089px;">0,00</span>
<span class="t" style="left:625.90px;top:497px;font-size:12.5px;color:#1a1a1a;letter-spacing:0.171px;">0 %:</span>
<span class="t" style="left:771.70px;top:497px;font-size:12.5px;color:#1a1a1a;letter-spacing:0.089px;">0,00</span>
<span class="t" style="left:625.90px;top:527px;font-size:12.5px;color:#1a1a1a;">ZW:</span>
<span class="t" style="left:771.70px;top:527px;font-size:12.5px;color:#1a1a1a;letter-spacing:0.089px;">0,00</span>
<span class="t" style="left:625.90px;top:553px;font-size:12.5px;color:#1a1a1a;letter-spacing:0.335px;">Netto nieodliczane:</span>
<span class="t" style="left:771.65px;top:553px;font-size:12.5px;color:#1a1a1a;letter-spacing:0.117px;">VAT nieodliczany:</span>
<span class="t" style="left:905.00px;top:553px;font-size:12.5px;color:#1a1a1a;letter-spacing:0.225px;">Brutto nieodliczane:</span>
<span class="t" style="left:714.15px;top:578px;font-size:12.5px;color:#1a1a1a;letter-spacing:0.097px;">5 000,00</span>
<span class="t" style="left:847.20px;top:578px;font-size:12.5px;color:#1a1a1a;letter-spacing:0.041px;">1 150,00</span>
<span class="t" style="left:996.00px;top:578px;font-size:12.5px;color:#1a1a1a;letter-spacing:0.066px;">6 150,00</span>
<span class="t" style="left:625.90px;top:604px;font-size:12.5px;color:#1a1a1a;letter-spacing:0.449px;">Netto razem:</span>
<span class="t" style="left:778.65px;top:604px;font-size:12.5px;color:#1a1a1a;letter-spacing:0.134px;">VAT razem:</span>
<span class="t" style="left:901.80px;top:604px;font-size:12.5px;color:#1a1a1a;letter-spacing:0.275px;">Brutto razem:</span>
<span class="t" style="left:714.65px;top:629px;font-size:12.5px;color:#1a1a1a;letter-spacing:0.038px;">10 000,00</span>
<span class="t" style="left:843.40px;top:629px;font-size:12.5px;color:#1a1a1a;letter-spacing:0.191px;">2 300,00</span>
<span class="t" style="left:989.20px;top:629px;font-size:12.5px;color:#1a1a1a;letter-spacing:0.043px;">12 300,00</span>
<span class="t" style="left:625.90px;top:665px;font-size:12.5px;color:#1a1a1a;letter-spacing:0.009px;">Kolumny KPiR</span>
<span class="t" style="left:625.90px;top:694px;font-size:12.5px;color:#1a1a1a;letter-spacing:0.205px;">Kolumna:</span>
<span class="t" style="left:918.80px;top:694px;font-size:12.5px;color:#1a1a1a;letter-spacing:0.243px;">Wartość:</span>
<span class="t" style="left:629.90px;top:719px;font-size:12.5px;color:#1a1a1a;letter-spacing:0.199px;">Pozostałe wydatki</span>
<span class="t" style="left:995.80px;top:719px;font-size:12.5px;color:#1a1a1a;letter-spacing:0.066px;">4 854,71</span>
<span class="t" style="left:625.90px;top:745px;font-size:12.5px;color:#1a1a1a;letter-spacing:0.205px;">Kolumna:</span>
<span class="t" style="left:918.80px;top:745px;font-size:12.5px;color:#1a1a1a;letter-spacing:0.243px;">Wartość:</span>
<span class="t" style="left:629.90px;top:769px;font-size:12.5px;color:#1a1a1a;letter-spacing:1.278px;">-</span>
<span class="t" style="left:1020.30px;top:770px;font-size:12.5px;color:#1a1a1a;letter-spacing:0.089px;">0,00</span>
<span class="t" style="left:625.90px;top:796px;font-size:12.5px;color:#1a1a1a;letter-spacing:0.205px;">Kolumna:</span>
<span class="t" style="left:918.80px;top:796px;font-size:12.5px;color:#1a1a1a;letter-spacing:0.243px;">Wartość:</span>
<span class="t" style="left:629.90px;top:820px;font-size:12.5px;color:#1a1a1a;letter-spacing:1.278px;">-</span>
<span class="t" style="left:1020.30px;top:821px;font-size:12.5px;color:#1a1a1a;letter-spacing:0.089px;">0,00</span>
<svg style="left:506px;top:411px" width="20" height="30" viewBox="0 0 20 30">
<path d="M0.8 1.4 L0.8 24.4 L5.6 20.2 L9.4 27.8 L13.6 25.7 L10.2 19.3 L17.4 19.3 Z" fill="#fff" stroke="#111" stroke-width="1.1" stroke-linejoin="miter"/></svg>
</div></body></html>
